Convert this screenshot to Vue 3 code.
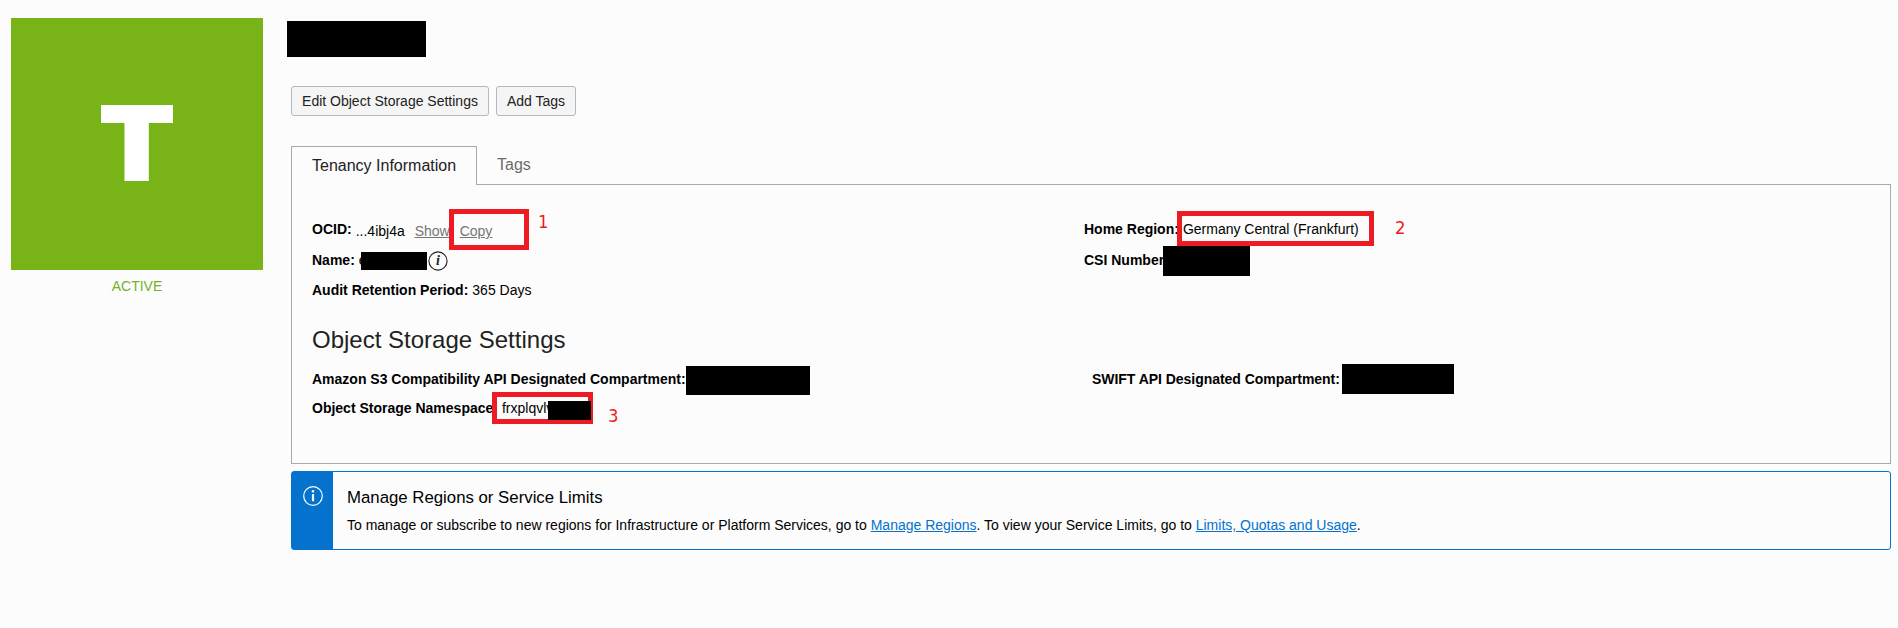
<script setup>
const redactions = ['title', 'name', 'csi', 's3', 'swift', 'ns']
const steps = [1, 2, 3]
</script>

<template>
  <div class="page">
    <aside class="side">
      <div class="tile">
        <svg width="72" height="76" viewBox="0 0 72 76"><path d="M0 0H72V18H47.8V76H23.5V18H0Z" fill="#fff" /></svg>
      </div>
      <div class="status">ACTIVE</div>
    </aside>

    <main class="main">
      <div class="actions">
        <button class="btn edit">Edit Object Storage Settings</button>
        <button class="btn add">Add Tags</button>
      </div>

      <nav class="tabs">
        <a class="tab active">Tenancy Information</a>
        <a class="tab">Tags</a>
      </nav>

      <section class="panel">
        <div class="cols">
          <div>
            <div class="row ocid"><b>OCID:</b><span class="id">...4ibj4a</span><a class="show">Show</a><a class="copy">Copy</a></div>
            <div class="row">
              <b>Name:</b><span class="val">e</span>
              <svg class="info" width="20" height="20" viewBox="0 0 20 20">
                <circle cx="10" cy="10" r="9.1" fill="none" stroke="#222" stroke-width="1.1" />
                <text x="10" y="14.3" text-anchor="middle" class="info-i">i</text>
              </svg>
            </div>
            <div class="row"><b>Audit Retention Period:</b><span class="val">365 Days</span></div>
          </div>
          <div>
            <div class="row first"><b>Home Region:</b><span class="val region">Germany Central (Frankfurt)</span></div>
            <div class="row"><b>CSI Number:</b></div>
          </div>
        </div>
        <h2>Object Storage Settings</h2>
        <div class="cols storage">
          <div>
            <div class="row"><b>Amazon S3 Compatibility API Designated Compartment:</b></div>
            <div class="row"><b>Object Storage Namespace:</b><span class="val">frxplqvlv</span></div>
          </div>
          <div class="swift-col">
            <div class="row"><b>SWIFT API Designated Compartment:</b></div>
          </div>
        </div>
      </section>

      <section class="notice">
        <div class="strip">
          <svg width="20" height="20" viewBox="0 0 20 20" fill="none" stroke="#fff">
            <circle cx="10" cy="10" r="9.3" stroke-width="1.2" />
            <path d="M10 8V15.2" stroke-width="2.2" />
            <path d="M10 4.2V6.4" stroke-width="2.4" />
          </svg>
        </div>
        <div class="body">
          <h3>Manage Regions or Service Limits</h3>
          <p>To manage or subscribe to new regions for Infrastructure or Platform Services, go to <a>Manage Regions</a>. To view your Service Limits, go to <a>Limits, Quotas and Usage</a>.</p>
        </div>
      </section>
    </main>

    <template v-for="n in steps" :key="n">
      <div class="frame" :class="'frame-' + n"></div>
      <div class="num" :class="'num-' + n">{{ n }}</div>
    </template>
    <div v-for="r in redactions" :key="r" class="mask" :class="'mask-' + r"></div>
  </div>
</template>

<style>
html, body { margin: 0; background: #fcfcfc; overflow: hidden; }
</style>

<style scoped>
* { box-sizing: border-box; }
.page {
  position: relative;
  display: flex;
  width: 1898px;
  height: 628px;
  background: #fcfcfc;
  color: #000;
  font: 14px/20px "Liberation Sans", Arial, sans-serif;
  white-space: nowrap;
}
.side { width: 252px; margin: 18px 28px 0 11px; }
.tile { height: 252px; padding: 87px 0 0 90px; background: #78b318; }
.tile svg { display: block; }
.status { margin-top: 6px; text-align: center; color: #78b02a; }
.main { width: 1600px; padding-top: 86px; }
.actions { display: flex; gap: 7px; }
.btn {
  height: 30px;
  padding: 0;
  border: 1px solid #b3b8c2;
  border-radius: 3px;
  background: #f5f5f5;
  color: #222;
  font: inherit;
}
.edit { width: 198px; }
.add { width: 80px; }
.tabs { display: flex; height: 39px; margin-top: 30px; position: relative; z-index: 1; }
.tab { height: 38px; padding: 9px 20px 0; font-size: 16px; line-height: 20px; color: #6b6b6b; }
.tab.active {
  width: 186px;
  height: 39px;
  border: 1px solid #a9a9a9;
  border-bottom: 0;
  background: #fcfcfc;
  color: #222;
}
.panel { height: 280px; margin-top: -1px; padding: 34px 20px 0; border: 1px solid #a9a9a9; }
.cols { display: grid; grid-template-columns: 772px 1fr; }
.row { display: flex; height: 30px; }
.ocid, .first { height: 31px; }
.ocid a, .id { position: relative; top: 2px; }
.id { width: 59px; margin-left: 4px; }
.ocid a { color: #757575; text-decoration: underline; }
.show { width: 45px; }
.val { margin-left: 4px; }
.info { margin: 1px 0 0 61px; }
.info-i { font: italic bold 14px "Liberation Serif", serif; fill: #222; }
h2 { margin: 15px 0 0; height: 44px; font-size: 24px; line-height: 30px; font-weight: 400; color: #222; }
.storage .row { height: 29px; }
.swift-col { padding-left: 8px; letter-spacing: -0.04px; }
.notice { display: flex; height: 79px; margin-top: 7px; border: 1px solid #0572ce; border-radius: 3px; }
.strip { width: 41px; padding: 14px 0 0 11px; background: #0572ce; }
.body { padding: 15px 0 0 14px; }
h3 { margin: 0; font-size: 16.8px; line-height: 22px; font-weight: 400; }
p { margin: 6px 0 0; }
p a { color: #0572ce; text-decoration: underline; }
.frame { position: absolute; border: 5px solid #ed1c24; }
.frame-1 { left: 449px; top: 209px; width: 80px; height: 41px; }
.frame-2 { left: 1177px; top: 211px; width: 197px; height: 35px; }
.frame-3 { left: 492px; top: 392px; width: 101px; height: 32px; }
.num {
  position: absolute;
  color: #ed1c24;
  font: 18.3px/20px "DejaVu Sans Condensed", "DejaVu Sans", sans-serif;
  font-stretch: condensed;
}
.num-1 { left: 538px; top: 212px; }
.num-2 { left: 1395px; top: 218px; }
.num-3 { left: 608px; top: 406px; }
.mask { position: absolute; background: #000; }
.mask-title { left: 287px; top: 21px; width: 139px; height: 36px; }
.mask-name { left: 361px; top: 252px; width: 66px; height: 18px; }
.mask-csi { left: 1163px; top: 246px; width: 87px; height: 30px; }
.mask-s3 { left: 686px; top: 366px; width: 124px; height: 29px; }
.mask-swift { left: 1342px; top: 364px; width: 112px; height: 30px; }
.mask-ns { left: 548px; top: 401px; width: 43px; height: 19px; }
</style>
